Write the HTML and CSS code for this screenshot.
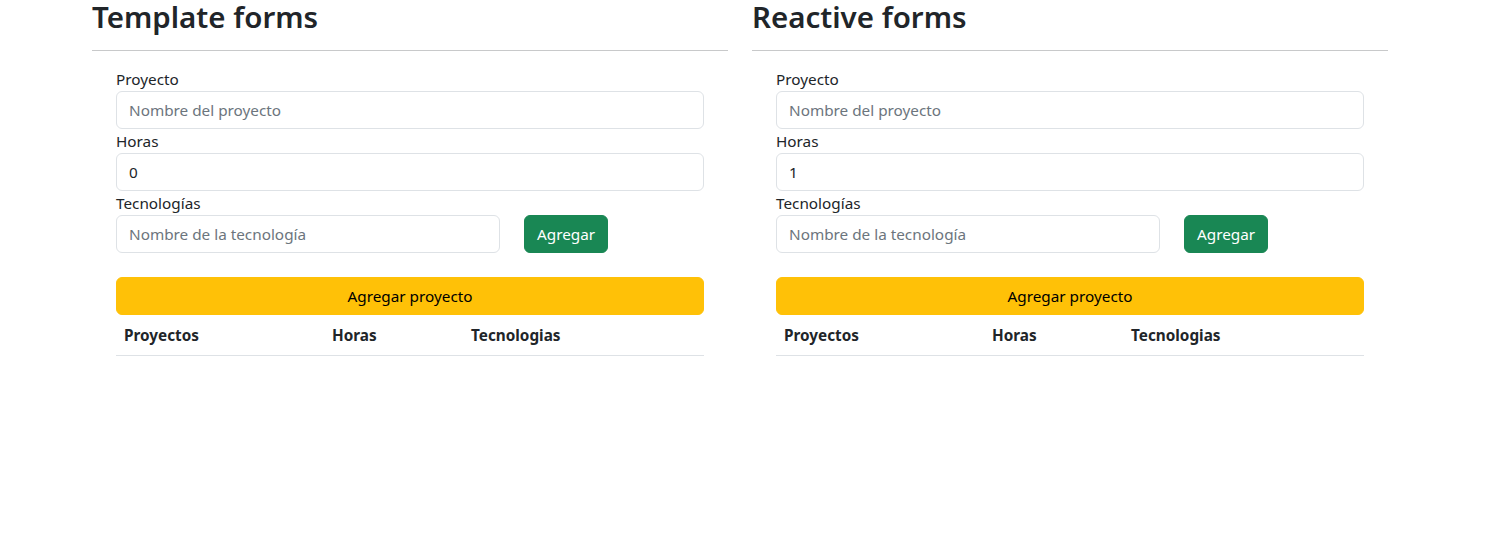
FILE: index.html
```html
<!DOCTYPE html>
<html lang="es">
<head>
<meta charset="utf-8">
<title>Forms</title>
<link rel="stylesheet" href="styles.css">
</head>
<body>
<div class="page">
  <section class="panel">
    <h2 class="title">Template forms</h2>
    <hr class="divider">
    <form class="form">
      <label class="label">Proyecto</label>
      <input class="control" type="text" placeholder="Nombre del proyecto">
      <label class="label">Horas</label>
      <input class="control" type="text" value="0">
      <label class="label">Tecnologías</label>
      <div class="tech-row">
        <input class="control tech-input" type="text" placeholder="Nombre de la tecnología">
        <button class="btn btn-green" type="button">Agregar</button>
      </div>
      <button class="btn btn-yellow" type="button">Agregar proyecto</button>
      <table class="table">
        <thead>
          <tr><th class="c1">Proyectos</th><th class="c2">Horas</th><th class="c3">Tecnologias</th></tr>
        </thead>
      </table>
    </form>
  </section>
  <section class="panel">
    <h2 class="title">Reactive forms</h2>
    <hr class="divider">
    <form class="form">
      <label class="label">Proyecto</label>
      <input class="control" type="text" placeholder="Nombre del proyecto">
      <label class="label">Horas</label>
      <input class="control" type="text" value="1">
      <label class="label">Tecnologías</label>
      <div class="tech-row">
        <input class="control tech-input" type="text" placeholder="Nombre de la tecnología">
        <button class="btn btn-green" type="button">Agregar</button>
      </div>
      <button class="btn btn-yellow" type="button">Agregar proyecto</button>
      <table class="table">
        <thead>
          <tr><th class="c1">Proyectos</th><th class="c2">Horas</th><th class="c3">Tecnologias</th></tr>
        </thead>
      </table>
    </form>
  </section>
</div>
</body>
</html>
```
FILE: styles.css
```css
* { box-sizing: border-box; }
html, body {
  margin: 0;
  background: #fff;
  color: #212529;
  font-family: "Noto Sans", "Open Sans", sans-serif;
  font-size: 15.3px;
  line-height: 24px;
}
.page {
  display: grid;
  grid-template-columns: 636px 636px;
  column-gap: 24px;
  margin-left: 92px;
  width: 1296px;
}
.panel { display: flex; flex-direction: column; }
.title {
  margin: 0;
  font-size: 29.5px;
  font-weight: 600;
  line-height: 34px;
  height: 34px;
}
.divider {
  margin: 16px 0 16px;
  border: 0;
  border-top: 1px solid #c8c9ca;
  height: 0;
}
.form {
  display: flex;
  flex-direction: column;
  padding: 0 24px;
}
.label { display: block; line-height: 24px; height: 24px; }
.control {
  display: block;
  width: 100%;
  height: 38px;
  padding: 6px 12px;
  font: inherit;
  color: #212529;
  background: #fff;
  border: 1px solid #dee2e6;
  border-radius: 6px;
  outline: none;
}
.control::placeholder { color: #6c757d; opacity: 1; }
.tech-row {
  display: flex;
  gap: 24px;
  align-items: flex-start;
}
.tech-input { width: 384px; flex: none; }
.btn {
  font: inherit;
  height: 38px;
  padding: 6px 12px;
  border: 1px solid transparent;
  border-radius: 6px;
  cursor: pointer;
}
.btn-green { background: #198754; color: #fff; border-color: #198754; }
.btn-yellow {
  margin-top: 24px;
  width: 100%;
  background: #ffc107;
  border-color: #ffc107;
  color: #000;
}
.table {
  width: 100%;
  border-collapse: collapse;
  table-layout: fixed;
}
.table th {
  text-align: left;
  font-weight: 700;
  padding: 8px;
  line-height: 24px;
  border-bottom: 1px solid #dee2e6;
}
.c1 { width: 208px; }
.c2 { width: 139px; }
.c3 { width: auto; }
```
